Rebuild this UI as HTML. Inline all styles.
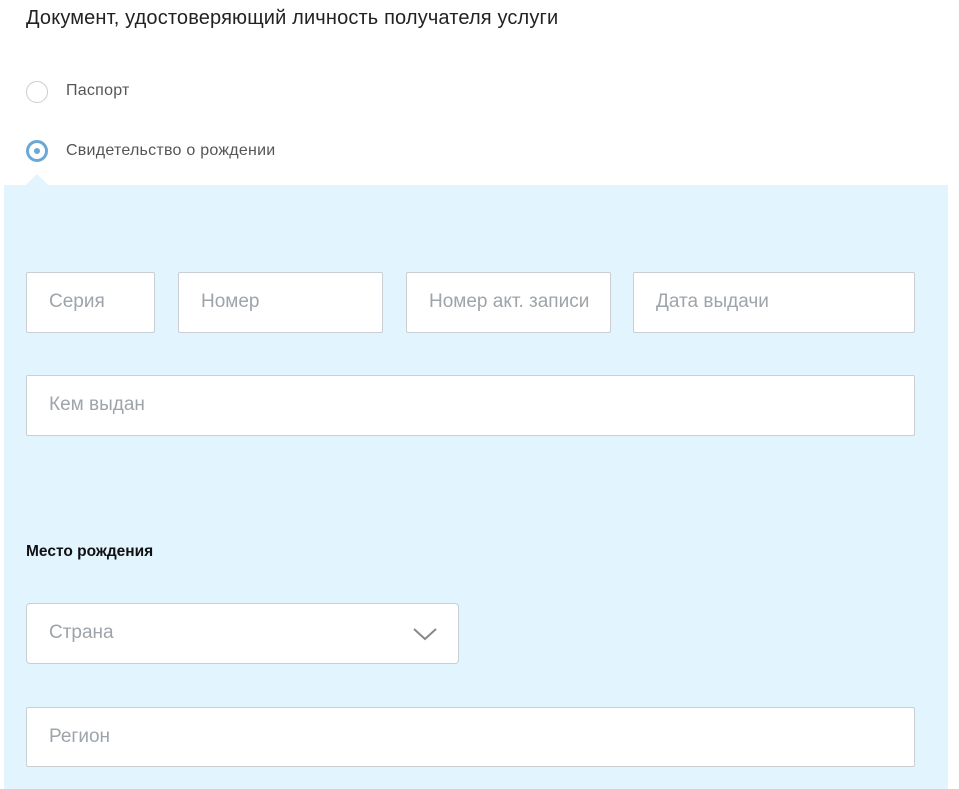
<!DOCTYPE html>
<html><head><meta charset="utf-8"><style>
body{margin:0;width:959px;height:789px;background:#fff;font-family:"Liberation Sans",sans-serif;position:relative;overflow:hidden}
.a{position:absolute}
.t{left:26px;top:7px;font-size:20px;letter-spacing:0.15px;color:#222}
.r{left:26px;border:1px solid #ccc;border-radius:50%;box-sizing:border-box;width:22px;height:22px}
.rl{left:66px;font-size:16px;letter-spacing:0.25px;color:#555}
.panel{left:4px;top:185px;width:944px;height:604px;background:#e2f4fd}
.f{background:#fff;border:1px solid #c9cfd3;box-sizing:border-box;font-size:19px;color:#9ea4a9;padding-left:22px;line-height:57px;border-radius:2px}
</style></head><body>
<div class="a t">Документ, удостоверяющий личность получателя услуги</div>
<div class="a r" style="top:81px"></div>
<div class="a rl" style="top:82px">Паспорт</div>
<div class="a r" style="top:140px;border:3px solid #6aa9d3"><div class="a" style="left:5px;top:5px;width:6px;height:6px;border-radius:50%;background:#6aa9d3"></div></div>
<div class="a rl" style="top:142px">Свидетельство о рождении</div>
<div class="a panel"></div>
<div class="a" style="left:26px;top:174px;width:0;height:0;border-left:11px solid transparent;border-right:11px solid transparent;border-bottom:11px solid #e2f4fd"></div>
<div class="a f" style="left:26px;top:272px;width:129px;height:61px">Серия</div>
<div class="a f" style="left:178px;top:272px;width:205px;height:61px">Номер</div>
<div class="a f" style="left:406px;top:272px;width:205px;height:61px">Номер акт. записи</div>
<div class="a f" style="left:633px;top:272px;width:282px;height:61px">Дата выдачи</div>
<div class="a f" style="left:26px;top:375px;width:889px;height:61px">Кем выдан</div>
<div class="a" style="left:26px;top:543px;font-size:15.5px;font-weight:bold;color:#111">Место рождения</div>
<div class="a f" style="left:26px;top:603px;width:433px;height:61px;border-radius:4px">Страна
<svg class="a" style="left:386px;top:22px" width="24" height="16" viewBox="0 0 24 16"><path d="M1 3 L12 13 L23 3" fill="none" stroke="#888" stroke-width="2"/></svg></div>
<div class="a f" style="left:26px;top:707px;width:889px;height:60px">Регион</div>
</body></html>
